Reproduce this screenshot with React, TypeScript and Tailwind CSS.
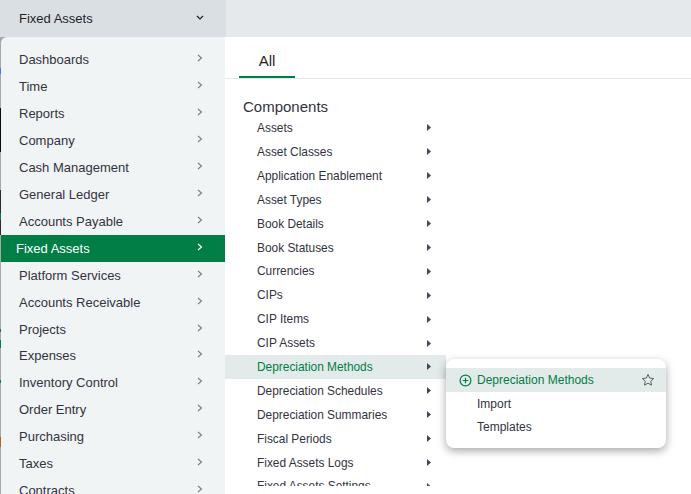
const menu = ["Dashboards", "Time", "Reports", "Company", "Cash Management", "General Ledger", "Accounts Payable", "Fixed Assets", "Platform Services", "Accounts Receivable", "Projects", "Expenses", "Inventory Control", "Order Entry", "Purchasing", "Taxes", "Contracts"];

const components = ["Assets", "Asset Classes", "Application Enablement", "Asset Types", "Book Details", "Book Statuses", "Currencies", "CIPs", "CIP Items", "CIP Assets", "Depreciation Methods", "Depreciation Schedules", "Depreciation Summaries", "Fiscal Periods", "Fixed Assets Logs", "Fixed Assets Settings"];

function Chevron({ className }: { className: string }) {
  return (
    <svg width="6" height="8" viewBox="0 0 6 8" fill="none" stroke="currentColor" strokeWidth="1.2" className={className}>
      <path d="M1 1l3.5 3L1 7" />
    </svg>
  );
}

export default function App() {
  return (
    <div className="h-[494px] w-[691px] overflow-hidden bg-white font-['Liberation_Sans',sans-serif] text-[13px] text-[#33333f]">
      <header className="flex h-[37px] bg-[#e5e9eb]">
        <div className="flex w-[226px] items-center justify-between bg-[#d9dfe2] pl-[19px] pr-[22px] text-[#1f1f2a]">
          <span>Fixed Assets</span>
          <svg width="8" height="6" viewBox="0 0 8 6" fill="none" stroke="currentColor" strokeWidth="1.2" className="mb-[2px]">
            <path d="M1 1l3 3 3-3" />
          </svg>
        </div>
      </header>
      <div className="flex h-[457px]">
        {/* sliver of the page behind the open menu */}
        <div className="h-full w-[225px] bg-[linear-gradient(#a8a8a8_0,#a8a8a8_31px,#3b7dd8_31px,#3b7dd8_37px,#a8a8a8_37px,#a8a8a8_71px,#0a0a0a_71px,#0a0a0a_115px,#a8a8a8_115px,#a8a8a8_153px,#2a2a30_153px,#2a2a30_176px,#007e45_176px,#007e45_183px,#2a2a30_183px,#2a2a30_198px,#a8a8a8_198px,#a8a8a8_292px,#007e45_292px,#007e45_295px,#a8a8a8_295px,#a8a8a8_303px,#007e45_303px,#007e45_311px,#a8a8a8_311px,#a8a8a8_343px,#007e45_343px,#007e45_346px,#a8a8a8_346px,#a8a8a8_400px,#b5651d_400px,#b5651d_410px,#a8a8a8_410px)] pl-[1px]">
          <nav className="h-full overflow-hidden rounded-tl-md bg-[#f1f4f5] pt-[9px]">
            {menu.map((item) => {
              const active = item === "Fixed Assets";
              return (
                <div key={item} className={`flex items-center justify-between pr-[22px] ${item === "Expenses" ? "h-[26px] pb-[1px]" : "h-[27px]"} ${active ? "bg-[#007e45] pl-[15px] font-medium text-white" : "pl-[18px]"}`}>
                  <span>{item}</span>
                  <Chevron className={`mb-[3px] ${active ? "text-white" : "text-[#80808c]"}`} />
                </div>
              );
            })}
          </nav>
        </div>
        <main className="relative flex-1">
          <div className="h-[42px] border-b border-[#e5e9eb] pl-[14px] pt-[5px]">
            <div className="flex h-[36px] w-[56px] justify-center border-b-2 border-[#007e45] pt-[8px] text-[15px] text-[#1f1f2a]">All</div>
          </div>
          <h2 className="ml-[18px] mt-[19px] text-[15px] leading-[18px] text-[#33333f]">Components</h2>
          <ul className="h-[370px] w-[221px] overflow-hidden">
            {components.map((item) => {
              const active = item === "Depreciation Methods";
              return (
                <li key={item} className={`flex h-[23.9px] items-center justify-between pl-[32px] pr-[15px] pt-[2.1px] text-[11.9px] ${active ? "bg-[#e3eaea] text-[#007e45]" : ""}`}>
                  <span>{item}</span>
                  <svg width="4" height="7" viewBox="0 0 4 7" className="mb-[2px] fill-[#3c4a5c]"><path d="M0 0l4 3.5L0 7z" /></svg>
                </li>
              );
            })}
          </ul>
          <div className="absolute left-[221px] top-[322px] w-[220px] rounded-lg bg-white pb-[10px] pt-[9px] text-[12px] shadow-[0_3px_8px_rgba(0,0,0,0.35)]">
            <div className="flex h-[24px] items-center justify-between bg-[#e3eaea] pl-[13px] pr-[11px] text-[#007e45]">
              <span className="flex items-center gap-[5px]">
                <svg width="13" height="13" viewBox="0 0 13 13" fill="none" stroke="currentColor" strokeWidth="1.2">
                  <circle cx="6.5" cy="6.5" r="5.4" />
                  <path d="M6.5 3.7v5.6M3.7 6.5h5.6" />
                </svg>
                Depreciation Methods
              </span>
              <svg width="14" height="14" viewBox="0 0 24 24" fill="none" stroke="#555" strokeWidth="1.6" strokeLinejoin="round">
                <path d="M12 2.5l2.9 6.2 6.8.8-5 4.6 1.3 6.7-6-3.3-6 3.3 1.3-6.7-5-4.6 6.8-.8z" />
              </svg>
            </div>
            <div className="flex h-[24px] items-center pl-[31px]">Import</div>
            <div className="flex h-[22px] items-center pl-[31px]">Templates</div>
          </div>
        </main>
      </div>
    </div>
  );
}
